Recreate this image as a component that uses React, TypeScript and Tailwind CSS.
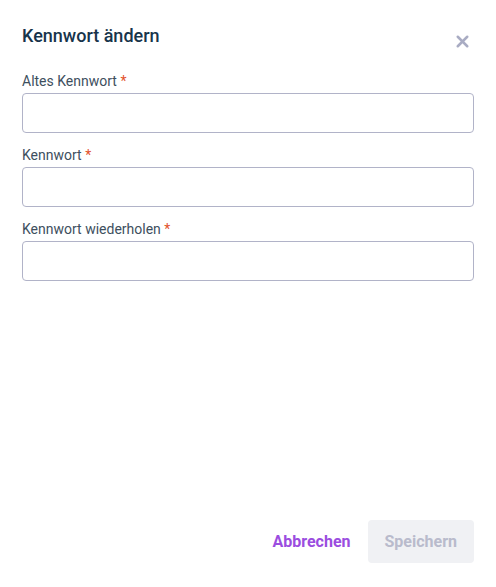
import { X } from "lucide-react"

const FIELDS = ["Altes Kennwort", "Kennwort", "Kennwort wiederholen"]

export default function App() {
  return (
    <div
      className="flex h-screen w-full flex-col bg-white px-[22px] pb-[24px] pt-[24px]"
      style={{ fontFamily: "Roboto, 'Liberation Sans', sans-serif" }}
    >
      {/* Header */}
      <div className="flex items-start justify-between">
        <h2 className="text-[18px] font-medium leading-[24px] text-[#17344b]">Kennwort ändern</h2>
        <button className="mr-[2px] mt-[8px] text-[#a9acc3]">
          <X size={19} strokeWidth={3.2} />
        </button>
      </div>

      {/* Fields */}
      <div className="mt-[20px] flex flex-col gap-[12px]">
        {FIELDS.map(label => (
          <div key={label} className="flex flex-col gap-[2px]">
            <label className="text-[14px] leading-[20px] text-[#3e4f5e]">
              {label} <span className="text-[#e2522b]">*</span>
            </label>
            <input
              type="password"
              className="h-[40px] w-full rounded-[4px] border border-[#b1b3c8] px-3 outline-none"
            />
          </div>
        ))}
      </div>

      {/* Footer */}
      <div className="mt-auto flex items-center justify-end gap-[1px]">
        <button className="px-4 text-[16px] font-bold text-[#9b4ddf]">Abbrechen</button>
        <button className="h-[43px] rounded-[4px] bg-[#f0f1f4] px-[17px] text-[16px] font-bold text-[#b9bbcc]">
          Speichern
        </button>
      </div>
    </div>
  )
}
